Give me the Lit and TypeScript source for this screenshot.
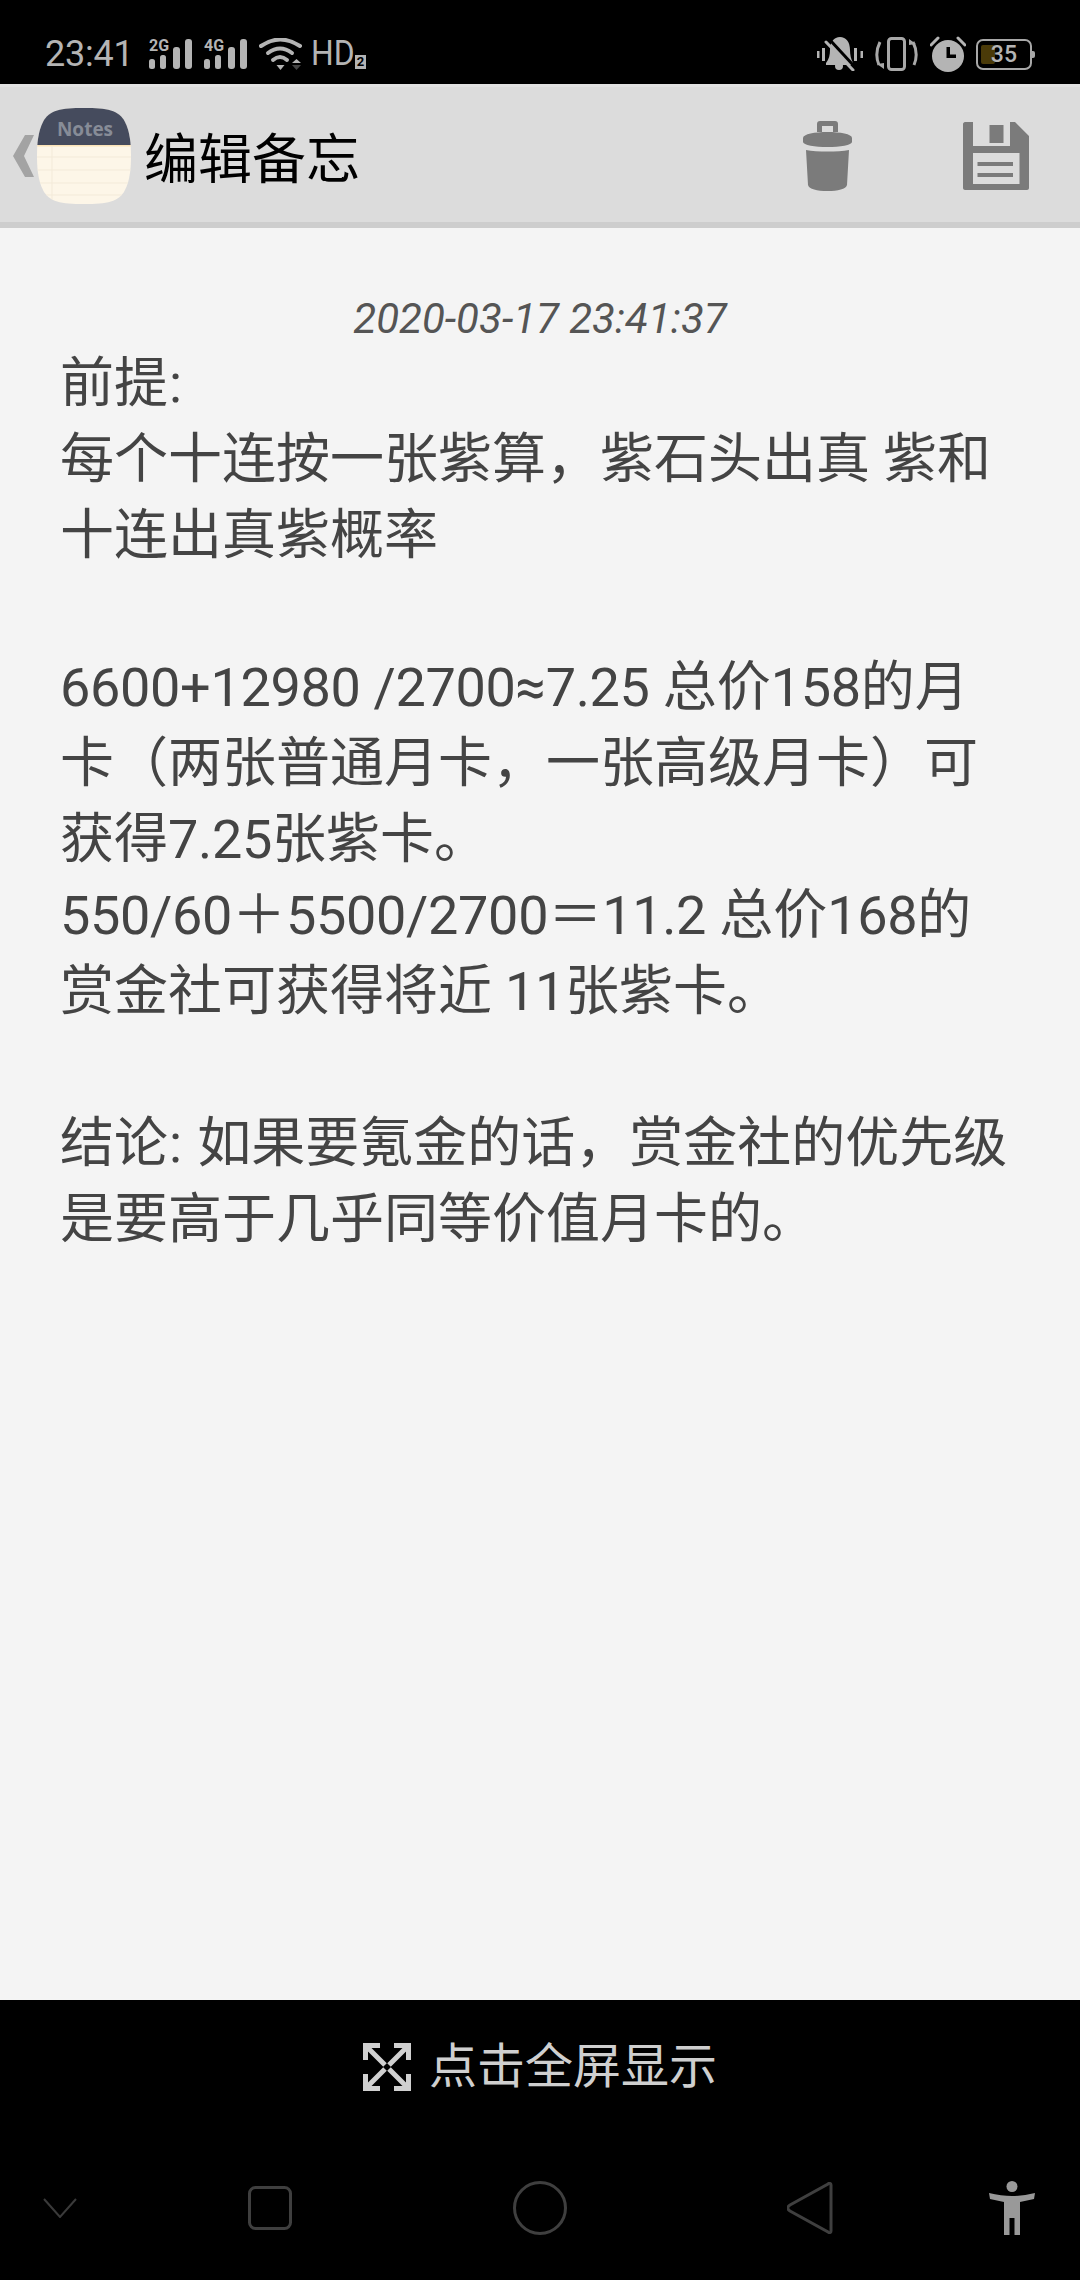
import { LitElement, html, css, svg } from 'lit';
import { customElement } from 'lit/decorators.js';

const NOTE_LINES = [
  '前提:',
  '每个十连按一张紫算，紫石头出真 紫和',
  '十连出真紫概率',
  '',
  '6600+12980 /2700≈7.25 总价158的月',
  '卡（两张普通月卡，一张高级月卡）可',
  '获得7.25张紫卡。',
  '550/60＋5500/2700＝11.2 总价168的',
  '赏金社可获得将近 11张紫卡。',
  '',
  '结论: 如果要氪金的话，赏金社的优先级',
  '是要高于几乎同等价值月卡的。',
];

// digits run a little tighter and the colon a little wider than the font's own advance
const renderLine = (line: string) =>
  line
    .split(/(:|[0-9+\/.≈ ]+)/)
    .map((part, i) =>
      i % 2 ? html`<span class=${part === ':' ? 'colon' : 'latin'}>${part}</span>` : part
    );

const signal = (label: string) => html`
  <svg class="signal" width="44" height="38" viewBox="0 -4 44 38">
    <text x="0" y="12" class="sig-label">${label}</text>
    ${svg`
      <rect x="0" y="20" width="6" height="10" rx="2.500" fill="#b4b4b4"/>
      <rect x="11" y="16" width="6" height="14" rx="2.500" fill="#b4b4b4"/>
      <rect x="24" y="8" width="7" height="22" rx="3" fill="#b4b4b4"/>
      <rect x="36" y="0" width="7" height="30" rx="3" fill="#b4b4b4"/>
    `}
  </svg>
`;

@customElement('app-root')
export class AppRoot extends LitElement {
  static styles = css`
    :host {
      display: flex;
      flex-direction: column;
      width: 1080px;
      height: 2280px;
      background: #000;
      font-family: Roboto, 'Noto Sans CJK SC', sans-serif;
    }

    .status {
      display: flex;
      align-items: center;
      height: 84px;
      padding: 24px 48px 0 45px;
      box-sizing: border-box;
      color: #b4b4b4;
      flex: none;
    }

    .time {
      font-size: 36px;
      width: 104px;
      line-height: 40px;
      letter-spacing: -0.2px;
    }

    .signal {
      margin-right: 11px;
    }

    .sig-label {
      font: 700 16px Roboto, sans-serif;
      fill: #b4b4b4;
    }

    .hd {
      display: flex;
      align-items: flex-end;
      font-size: 35px;
      line-height: 30px;
      margin-left: 9px;
    }

    .hd-text {
      display: inline-block;
      width: 44px;
      transform: scaleX(0.91);
      transform-origin: left;
    }

    .hd-sub {
      display: inline-block;
      width: 11px;
      height: 14px;
      background: #b4b4b4;
      color: #000;
      font-size: 13px;
      font-weight: 700;
      line-height: 14px;
      text-align: center;
    }

    .status-right {
      margin-left: auto;
      display: flex;
      align-items: center;
      gap: 12px;
    }

    .battery {
      position: relative;
      box-sizing: border-box;
      width: 56px;
      height: 31px;
      margin-left: -2px;
      border: 2px solid #a8a8a8;
      border-radius: 7px;
      font-size: 23px;
      font-weight: 500;
      line-height: 27px;
      text-align: right;
      padding-right: 13px;
      color: #b4b4b4;
    }

    .battery::before {
      content: '';
      position: absolute;
      left: 3px;
      top: 4px;
      width: 14px;
      height: 19px;
      border-radius: 2px;
      background: #4a3a08;
    }

    .battery::after {
      content: '';
      position: absolute;
      right: -5px;
      top: 10px;
      width: 3px;
      height: 7px;
      border-radius: 0 2px 2px 0;
      background: #a8a8a8;
    }

    .battery span {
      position: relative;
    }

    .header {
      display: flex;
      align-items: center;
      box-sizing: border-box;
      height: 144px;
      padding: 3px 51px 0 13px;
      background: #dcdcdc;
      border-top: 3px solid #e2e2e2;
      border-bottom: 6px solid #cdcdcd;
      flex: none;
    }

    .app-icon {
      margin-left: 3px;
    }

    .title {
      margin-left: 13px;
      font-size: 54px;
      line-height: 64px;
      color: #000;
      font-family: 'Noto Sans CJK SC', sans-serif;
    }

    .notes-label {
      font: 700 19px 'Open Sans', sans-serif;
      fill: #878c97;
    }

    .actions {
      margin-left: auto;
      display: flex;
      align-items: center;
      gap: 111px;
    }

    .content {
      flex: 1;
      background: #f4f4f4;
      padding: 68px 0 0 60px;
      color: #444;
      font-size: 54px;
      line-height: 76px;
    }

    .date {
      margin-left: -60px;
      height: 50px;
      font-size: 42px;
      line-height: 46px;
      font-style: italic;
      color: #555;
      text-align: center;
    }

    .line {
      height: 76px;
      white-space: nowrap;
    }

    .latin {
      letter-spacing: -0.33px;
    }

    .colon {
      margin-left: 1px;
      letter-spacing: 2px;
    }

    .footer {
      flex: none;
      height: 280px;
      background: #000;
    }

    .fullscreen {
      display: flex;
      align-items: center;
      justify-content: center;
      gap: 18px;
      height: 48px;
      padding-top: 43px;
      color: #cfcfcf;
      font-size: 48px;
      line-height: 48px;
    }

    .nav {
      display: grid;
      grid-template-columns: 120px 300px 240px 300px 104px;
      align-items: center;
      justify-items: center;
      margin-top: 89px;
      height: 56px;
    }
  `;

  render() {
    return html`
      <div class="status">
        <span class="time">23:41</span>
        ${signal('2G')}
        ${signal('4G')}
        <svg width="43" height="32" viewBox="0 0 43 32">
          <g fill="none" stroke="#b4b4b4" stroke-width="4" stroke-linecap="round">
            <path d="M2 8 Q21 -5 41 8" />
            <path d="M9 15 Q21 6 33 15" />
            <path d="M14 22 Q21 16 28 22" />
          </g>
          <path d="M17.500 27 H25.500 L21.500 32 Z" fill="#b4b4b4" />
          <path d="M33 25 L37.500 21 L42 25 Z" fill="#b4b4b4" />
          <path d="M33 27 H42 L37.500 32 Z" fill="#444" />
        </svg>
        <div class="hd"><span class="hd-text">HD</span><span class="hd-sub">2</span></div>
        <div class="status-right">
          <svg width="46" height="34" viewBox="0 0 46 34">
            <path d="M9 26 C12 22 13 18 13 13 C13 5 17 0 23 0 C29 0 33 5 33 13 C33 18 34 22 36 26 L36 28 H9 Z" fill="#b4b4b4" />
            <circle cx="22" cy="29" r="4" fill="#b4b4b4" />
            <path d="M13 3 L37 29" stroke="#000" stroke-width="3" />
            <path d="M9 5 L36 33" stroke="#b4b4b4" stroke-width="3" stroke-linecap="round" />
            <path d="M1 14 V21 M6.500 11 V24 M38.500 11 V24 M45 14 V21" stroke="#b4b4b4" stroke-width="3" />
          </svg>
          <svg width="43" height="34" viewBox="0 0 43 34">
            <rect x="13.500" y="1.500" width="16" height="31" rx="3" fill="none" stroke="#a8a8a8" stroke-width="3" />
            <path d="M5 5 C1 13 1 21 4 28 M38 5 C42 13 42 21 39 28" fill="none" stroke="#a8a8a8" stroke-width="3" />
            <path d="M2 27 L9 32 V26 Z M41 7 L34 2 V8 Z" fill="#a8a8a8" />
          </svg>
          <svg width="36" height="36" viewBox="0 0 36 36">
            <circle cx="18" cy="20" r="16" fill="#b4b4b4" />
            <path d="M16.500 11 H20 V18.500 H26 V22 H16.500 Z" fill="#000" />
            <path d="M1 9 L8 2 M35 9 L28 2" stroke="#b4b4b4" stroke-width="3" stroke-linecap="round" />
          </svg>
          <div class="battery"><span>35</span></div>
        </div>
      </div>

      <div class="header">
        <svg width="21" height="42" viewBox="0 0 21 42">
          <path d="M21 0 H12 L0 21 L12 42 H21 L11 21 Z" fill="#a3a3a3" />
        </svg>
        <svg class="app-icon" width="94" height="96" viewBox="0 0 94 96">
          <defs>
            <clipPath id="squircle">
              <path d="M47 0 C70 0 82 2 88 14 C93 24 94 36 94 48 C94 60 93 72 88 82 C82 94 70 96 47 96 C24 96 12 94 6 82 C1 72 0 60 0 48 C0 36 1 24 6 14 C12 2 24 0 47 0 Z" />
            </clipPath>
          </defs>
          <g clip-path="url(#squircle)">
            <rect width="94" height="96" fill="#fdf6e8" />
            <rect width="94" height="37" fill="#454b5d" />
            <rect y="37" width="94" height="1.500" fill="#fbe3b8" />
            <path d="M0 49 H94 M0 62 H94 M0 75 H94 M0 87 H94 M15 38 V96" stroke="#f3ead9" stroke-width="1" />
          </g>
          <text x="48" y="28" text-anchor="middle" class="notes-label">Notes</text>
        </svg>
        <span class="title">编辑备忘</span>
        <div class="actions">
          <svg width="49" height="70" viewBox="0 0 49 70">
            <path d="M14 11 V3 C14 1 15 0 17 0 H32 C34 0 35 1 35 3 V11 H30 V5 H19 V11 Z" fill="#7b7b7b" />
            <path d="M0 17 C0 13 12 11 24.500 11 C37 11 49 13 49 17 V21 C49 24 37 26 24.500 26 C12 26 0 24 0 21 Z" fill="#7b7b7b" />
            <path d="M3 29 C14 31 35 31 46 29 L44 64 C43 68 35 70 24.500 70 C14 70 6 68 5 64 Z" fill="#7b7b7b" />
          </svg>
          <svg width="66" height="68" viewBox="0 0 66 68">
            <path fill-rule="evenodd" fill="#7b7b7b" d="M2 0 H52 L66 14 V66 C66 67 65 68 64 68 H2 C1 68 0 67 0 66 V2 C0 1 1 0 2 0 Z M10 0 V24 H47 V0 Z M10 31 V62 H56.500 V31 Z" />
            <rect x="26.500" y="3" width="14" height="18" fill="#7b7b7b" />
            <rect x="14.500" y="40" width="35.500" height="4" fill="#7b7b7b" />
            <rect x="14.500" y="51" width="35.500" height="4" fill="#7b7b7b" />
          </svg>
        </div>
      </div>

      <div class="content">
        <div class="date">2020-03-17 23:41:37</div>
        ${NOTE_LINES.map((l) => html`<div class="line">${renderLine(l)}</div>`)}
      </div>

      <div class="footer">
        <div class="fullscreen">
          <svg width="48" height="48" viewBox="0 0 48 48">
            <g fill="none" stroke="#d0d0d0" stroke-width="5">
              <path d="M17 2.500 H2.500 V17 M5 5 L22 22" />
              <path d="M31 2.500 H45.500 V17 M43 5 L26 22" />
              <path d="M17 45.500 H2.500 V31 M5 43 L22 26" />
              <path d="M31 45.500 H45.500 V31 M43 43 L26 26" />
            </g>
          </svg>
          <span>点击全屏显示</span>
        </div>
        <div class="nav">
          <svg width="34" height="20" viewBox="0 0 34 20">
            <path d="M1 1 L17 19 L33 1" fill="none" stroke="#3a3a3a" stroke-width="2" />
          </svg>
          <svg width="44" height="44" viewBox="0 0 44 44">
            <rect x="1.500" y="1.500" width="41" height="41" rx="6" fill="none" stroke="#3f3f3f" stroke-width="3" />
          </svg>
          <svg width="54" height="54" viewBox="0 0 54 54">
            <circle cx="27" cy="27" r="25.500" fill="none" stroke="#3f3f3f" stroke-width="3" />
          </svg>
          <svg width="46" height="52" viewBox="0 0 46 52">
            <path d="M44 3 C44 1 42 1 41 2 L3 23 C0 25 0 27 3 29 L41 50 C42 51 44 51 44 49 Z" fill="none" stroke="#3f3f3f" stroke-width="3" />
          </svg>
          <svg width="46" height="54" viewBox="0 0 46 54">
            <ellipse cx="23" cy="5.500" rx="5.500" ry="5.500" fill="#999" />
            <path d="M0 12 C8 14 16 15 23 15 C30 15 38 14 46 12 L45 18 L31 21 V54 H25.500 V37 H20.500 V54 H15 V21 L1 18 Z" fill="#999" />
          </svg>
        </div>
      </div>
    `;
  }
}
